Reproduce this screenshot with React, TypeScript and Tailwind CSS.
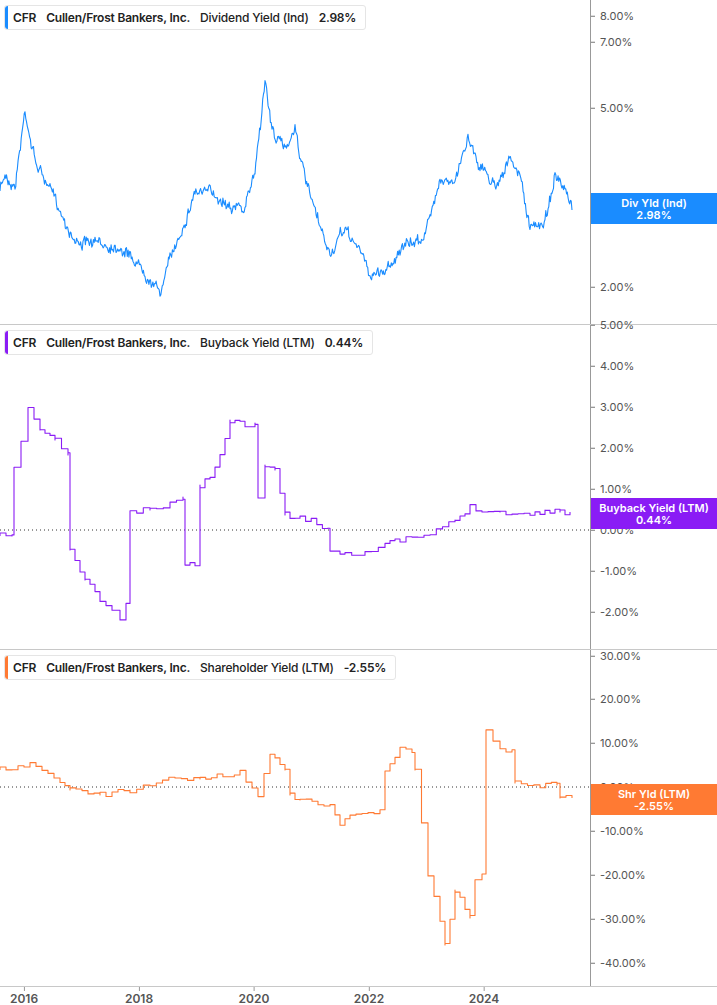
import React from "react";

type P = [number, number];

function rng(seed: number) {
  let s = seed;
  return () => {
    s = (s * 16807) % 2147483647;
    return s / 2147483647;
  };
}

function noisy(pts: P[], amp: number, seed: number, step = 0.8): string {
  const r = rng(seed);
  const out: string[] = [];
  let drift = 0;
  for (let i = 0; i < pts.length - 1; i++) {
    const [x0, y0] = pts[i];
    const [x1, y1] = pts[i + 1];
    const n = Math.max(1, Math.round((x1 - x0) / step));
    for (let k = 0; k < n; k++) {
      const t = k / n;
      const x = x0 + (x1 - x0) * t;
      drift = drift * 0.85 + (r() - 0.5) * amp;
      const y = y0 + (y1 - y0) * t + drift + (r() - 0.5) * amp * 1.6;
      out.push(`${x.toFixed(1)},${y.toFixed(1)}`);
    }
  }
  const l = pts[pts.length - 1];
  out.push(`${l[0]},${l[1]}`);
  return out.join(" ");
}

function steps(pts: P[], amp: number, seed: number): string {
  const r = rng(seed);
  const out: string[] = [];
  for (let i = 0; i < pts.length - 1; i++) {
    const [x0, y0] = pts[i];
    const [x1, y1] = pts[i + 1];
    const n = Math.max(1, Math.round((x1 - x0) / 6));
    let py = y0;
    for (let k = 0; k < n; k++) {
      const x = x0 + ((x1 - x0) * k) / n;
      const y = y0 + ((y1 - y0) * k) / n + (r() - 0.5) * amp * 2;
      out.push(`${x.toFixed(1)},${py.toFixed(1)}`);
      out.push(`${x.toFixed(1)},${y.toFixed(1)}`);
      py = y;
    }
    out.push(`${x1},${py.toFixed(1)}`);
  }
  const l = pts[pts.length - 1];
  out.push(`${l[0]},${l[1]}`);
  return out.join(" ");
}

const p1: P[] = [[0,190],[5,175],[15,185],[25,110],[35,160],[50,190],[75,240],[95,245],[120,245],[145,270],[160,292],[170,260],[185,220],[195,190],[215,195],[245,210],[255,170],[265,80],[272,130],[285,150],[295,125],[305,180],[320,230],[330,255],[345,230],[360,250],[370,275],[385,270],[400,250],[420,240],[430,220],[440,175],[455,185],[468,135],[480,165],[495,185],[508,160],[520,175],[530,230],[545,220],[555,175],[565,195],[572,210]];
const p2: P[] = [[0,211],[12,211],[14,145],[28,83],[40,105],[55,115],[68,130],[70,225],[85,255],[100,275],[112,285],[120,295],[126,280],[130,187],[150,185],[170,180],[183,172],[185,240],[195,240],[200,160],[215,145],[230,95],[245,100],[255,98],[258,170],[265,140],[275,145],[285,190],[300,192],[328,203],[330,225],[345,228],[365,227],[385,220],[400,215],[430,210],[455,195],[470,182],[500,187],[530,190],[545,185],[560,187],[570,187]];
const p3: P[] = [[0,120],[30,115],[60,130],[70,140],[100,145],[130,140],[150,135],[175,128],[200,129],[240,122],[258,145],[270,105],[285,120],[290,145],[300,150],[330,155],[340,175],[350,165],[380,160],[385,122],[400,98],[412,100],[415,120],[428,225],[440,270],[445,295],[455,240],[470,268],[475,230],[482,225],[486,82],[500,98],[512,100],[515,133],[540,135],[557,135],[560,148],[572,148]];

const font = { fontFamily: "Inter, 'Liberation Sans', sans-serif" };

function Tick({ label, top }: { label: string; top: number }) {
  return (
    <div className="absolute left-0 flex items-center -translate-y-1/2" style={{ top }}>
      <div className="h-px w-[4px] bg-[#777]" />
      <span className="ml-[5px] text-[11px] text-[#555]">{label}</span>
    </div>
  );
}

function Panel({
  height, color, title, value, ticks, poly, zeroY, badge, badgeTop,
}: {
  height: number; color: string; title: string; value: string; ticks: [string, number][];
  poly: string; zeroY?: number; badge: [string, string]; badgeTop: number;
}) {
  return (
    <div className="flex border-b border-[#c8c8c8]" style={{ height }}>
      <div className="relative w-[591px] shrink-0 border-r border-[#999]">
        <svg className="absolute inset-0" width={591} height={height}>
          {zeroY !== undefined && (
            <line x1={0} x2={591} y1={zeroY} y2={zeroY} stroke="#333" strokeWidth={1} strokeDasharray="1 3" />
          )}
          <polyline points={poly} fill="none" stroke={color} strokeWidth={1.1} strokeLinejoin="round" />
        </svg>
        <div className="absolute left-[4px] top-[5px] flex h-[25px] items-center gap-[10px] rounded-[3px] border border-[#e5e5e5] bg-white pl-[8px] pr-[9px] text-[12px] font-semibold tracking-[-0.2px] text-[#222]">
          <div className="absolute left-0 top-0 bottom-0 w-[3px] rounded-l-[3px]" style={{ background: color }} />
          <span>CFR</span>
          <span>Cullen/Frost Bankers, Inc.</span>
          <span className="font-medium">{title}</span>
          <span>{value}</span>
        </div>
      </div>
      <div className="relative flex-1">
        {ticks.map(([l, t]) => <Tick key={l} label={l} top={t} />)}
        <div
          className="absolute left-0 right-0 flex h-[31px] flex-col items-center justify-center text-[11px] font-semibold leading-[12px] text-white"
          style={{ top: badgeTop, background: color }}
        >
          <span>{badge[0]}</span>
          <span>{badge[1]}</span>
        </div>
      </div>
    </div>
  );
}

export default function App() {
  return (
    <div className="h-[1005px] w-[717px] overflow-hidden bg-white" style={font}>
      <Panel height={325} color="#1a8cff" title="Dividend Yield (Ind)" value="2.98%"
        ticks={[["8.00%",16],["7.00%",42],["5.00%",108],["3.00%",207],["2.00%",287]]}
        poly={noisy(p1, 5, 7)} badge={["Div Yld (Ind)","2.98%"]} badgeTop={193} />
      <Panel height={325} color="#8a1cf5" title="Buyback Yield (LTM)" value="0.44%"
        ticks={[["5.00%",0],["4.00%",41],["3.00%",82],["2.00%",123],["1.00%",164],["0.00%",205],["-1.00%",246],["-2.00%",287]]}
        poly={steps(p2, 3, 11)} zeroY={205} badge={["Buyback Yield (LTM)","0.44%"]} badgeTop={173} />
      <Panel height={337} color="#ff7a33" title="Shareholder Yield (LTM)" value="-2.55%"
        ticks={[["30.00%",6],["20.00%",49],["10.00%",93],["0.00%",137],["-10.00%",181],["-20.00%",225],["-30.00%",269],["-40.00%",313]]}
        poly={steps(p3, 3, 5)} zeroY={137} badge={["Shr Yld (LTM)","-2.55%"]} badgeTop={134} />
      <div className="relative h-[18px] w-[591px]">
        {[["2016",24],["2018",139],["2020",254],["2022",369],["2024",484]].map(([l, x]) => (
          <div key={l as string} className="absolute top-0 flex flex-col items-center -translate-x-1/2" style={{ left: x as number }}>
            <div className="h-[4px] w-px bg-[#999]" />
            <span className="mt-[1px] text-[12px] font-semibold leading-[14px] text-[#555]">{l}</span>
          </div>
        ))}
      </div>
    </div>
  );
}
